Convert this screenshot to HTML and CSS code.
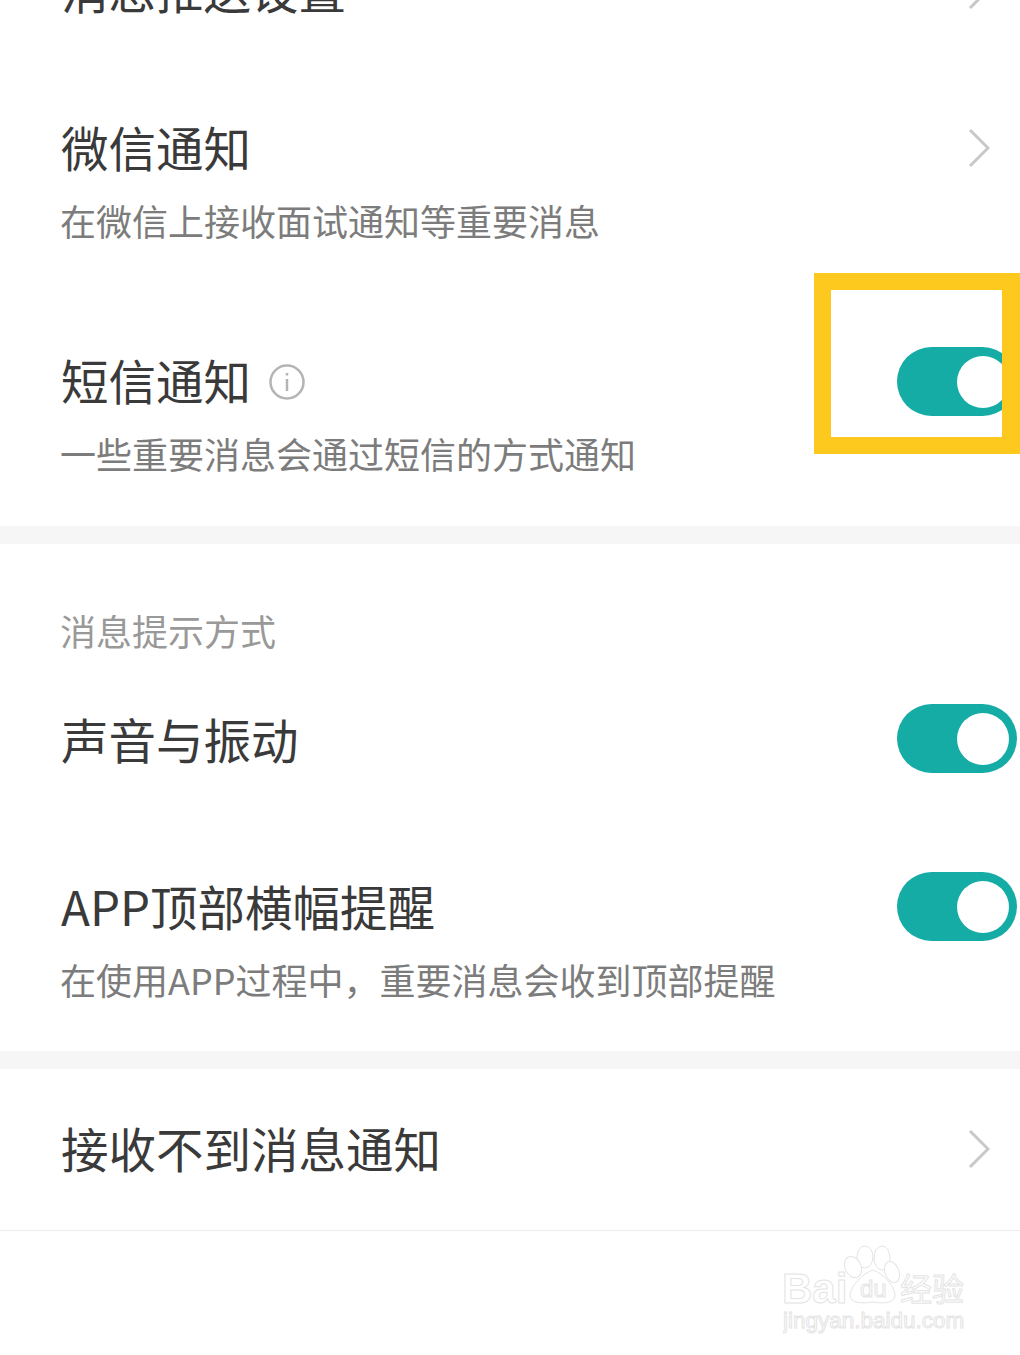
FILE: index.html
```html
<!DOCTYPE html>
<html lang="zh-CN">
<head>
    <meta charset="UTF-8">
    <meta name="viewport" content="width=device-width, initial-scale=1.0">
    <title>消息推送设置</title>
    <link rel="stylesheet" href="styles.css">
</head>
<body>
    <div class="page">
        <div class="content">
            <section class="group">
                <div class="row row-first">
                    <div class="row-text">
                        <div class="row-title">消息推送设置</div>
                    </div>
                    <svg class="chevron" viewBox="0 0 22 40"><path d="M2 2 L20 20 L2 38"/></svg>
                </div>
                <div class="row row-wechat">
                    <div class="row-text">
                        <div class="row-title">微信通知</div>
                        <div class="row-sub">在微信上接收面试通知等重要消息</div>
                    </div>
                    <svg class="chevron" viewBox="0 0 22 40"><path d="M2 2 L20 20 L2 38"/></svg>
                </div>
                <div class="row row-sms">
                    <div class="row-text">
                        <div class="row-title">短信通知
                            <svg class="info" viewBox="0 0 36 36">
                                <circle cx="18" cy="18" r="16.5"/>
                                <path d="M18 15 V27"/>
                                <path d="M18 9 V11.5"/>
                            </svg>
                        </div>
                        <div class="row-sub">一些重要消息会通过短信的方式通知</div>
                    </div>
                    <div class="toggle"><span class="knob"></span></div>
                </div>
            </section>

            <section class="group">
                <div class="section-label">消息提示方式</div>
                <div class="row row-sound">
                    <div class="row-text">
                        <div class="row-title">声音与振动</div>
                    </div>
                    <div class="toggle"><span class="knob"></span></div>
                </div>
                <div class="row row-banner">
                    <div class="row-text">
                        <div class="row-title">APP顶部横幅提醒</div>
                        <div class="row-sub">在使用APP过程中，重要消息会收到顶部提醒</div>
                    </div>
                    <div class="toggle"><span class="knob"></span></div>
                </div>
            </section>

            <section class="group group-last">
                <div class="row row-help">
                    <div class="row-text">
                        <div class="row-title">接收不到消息通知</div>
                    </div>
                    <svg class="chevron" viewBox="0 0 22 40"><path d="M2 2 L20 20 L2 38"/></svg>
                </div>
            </section>
        </div>

        <div class="highlight"></div>

        <svg class="watermark" viewBox="0 0 190 95">
            <ellipse cx="82" cy="18" rx="8" ry="11"/>
            <ellipse cx="99" cy="19" rx="8" ry="12"/>
            <ellipse cx="70" cy="28" rx="8" ry="11" transform="rotate(-25 70 28)"/>
            <ellipse cx="109" cy="33" rx="7" ry="11" transform="rotate(-20 109 33)"/>
            <path d="M90 31 C100 34 112 48 112 56 C112 64 102 65 90 63 C78 65 67 64 67 56 C67 48 80 34 90 31 Z"/>
            <text class="wm-big" x="-1" y="64">Bai</text>
            <text class="wm-small" x="77" y="58">du</text>
            <text class="wm-cn" x="117" y="62">经验</text>
            <text class="wm-url" x="0" y="89">jingyan.baidu.com</text>
        </svg>
    </div>
</body>
</html>
```

FILE: styles.css
```css
body {
    margin: 0;
    padding: 0;
    background: #fff;
    font-family: "Noto Sans CJK SC", "Noto Sans", sans-serif;
}
.page {
    position: relative;
    height: 1355px;
    overflow: hidden;
    background: #fff;
}
.content {
    margin-top: -41px;
}
.group {
    border-bottom: 18px solid #f6f6f6;
}
.group-last {
    border-bottom: 1px solid #ececec;
}
.row {
    display: flex;
    justify-content: space-between;
    align-items: flex-start;
    padding-left: 60px;
}
.row-first {
    height: 158px;
}
.row-wechat {
    height: 233px;
}
.row-sms {
    height: 176px;
}
.row-sound {
    height: 167px;
}
.row-banner {
    height: 175px;
}
.row-help {
    padding-top: 49px;
    height: 112px;
}
.row-title {
    display: flex;
    align-items: center;
    height: 60px;
    margin-left: 1px;
    font-size: 47.5px;
    line-height: 60px;
    color: #3a3a3a;
}
.row-sub {
    margin-top: 23px;
    font-size: 36px;
    line-height: 40px;
    color: #7c7c7c;
}
.section-label {
    padding: 66px 0 0 60px;
    height: 99px;
    font-size: 36px;
    line-height: 40px;
    color: #999;
}
.chevron {
    width: 22px;
    height: 40px;
    margin: 11px 30px 0 0;
    fill: none;
    stroke: #c8c8c8;
    stroke-width: 3;
}
.info {
    width: 36px;
    height: 36px;
    margin: 4px 0 0 18px;
    fill: none;
    stroke: #b4b4b4;
    stroke-width: 2.5;
}
.toggle {
    display: flex;
    align-items: center;
    justify-content: flex-end;
    box-sizing: border-box;
    width: 120px;
    height: 69px;
    margin: -4px 3px 0 0;
    padding-right: 8px;
    border-radius: 35px;
    background: #14aca5;
}
.row-sms .toggle {
    margin-top: -3px;
}
.row-sound .toggle {
    margin-top: -5px;
}
.knob {
    width: 52px;
    height: 52px;
    border-radius: 50%;
    background: #fff;
}
.highlight {
    position: absolute;
    left: 814px;
    top: 273px;
    box-sizing: border-box;
    width: 206px;
    height: 181px;
    border: 17px solid #fdc91f;
    border-right-width: 18px;
}
.watermark {
    position: absolute;
    left: 783px;
    top: 1239px;
    width: 190px;
    height: 95px;
    fill: #fff;
    stroke: #e4e4e4;
    stroke-width: 1;
}
.wm-big {
    font-family: "Liberation Sans", sans-serif;
    font-size: 42px;
    font-weight: 700;
}
.wm-small {
    font-family: "Liberation Sans", sans-serif;
    font-size: 24px;
}
.wm-cn {
    font-size: 32px;
}
.wm-url {
    font-family: "Liberation Sans", sans-serif;
    font-size: 22.5px;
}
```
